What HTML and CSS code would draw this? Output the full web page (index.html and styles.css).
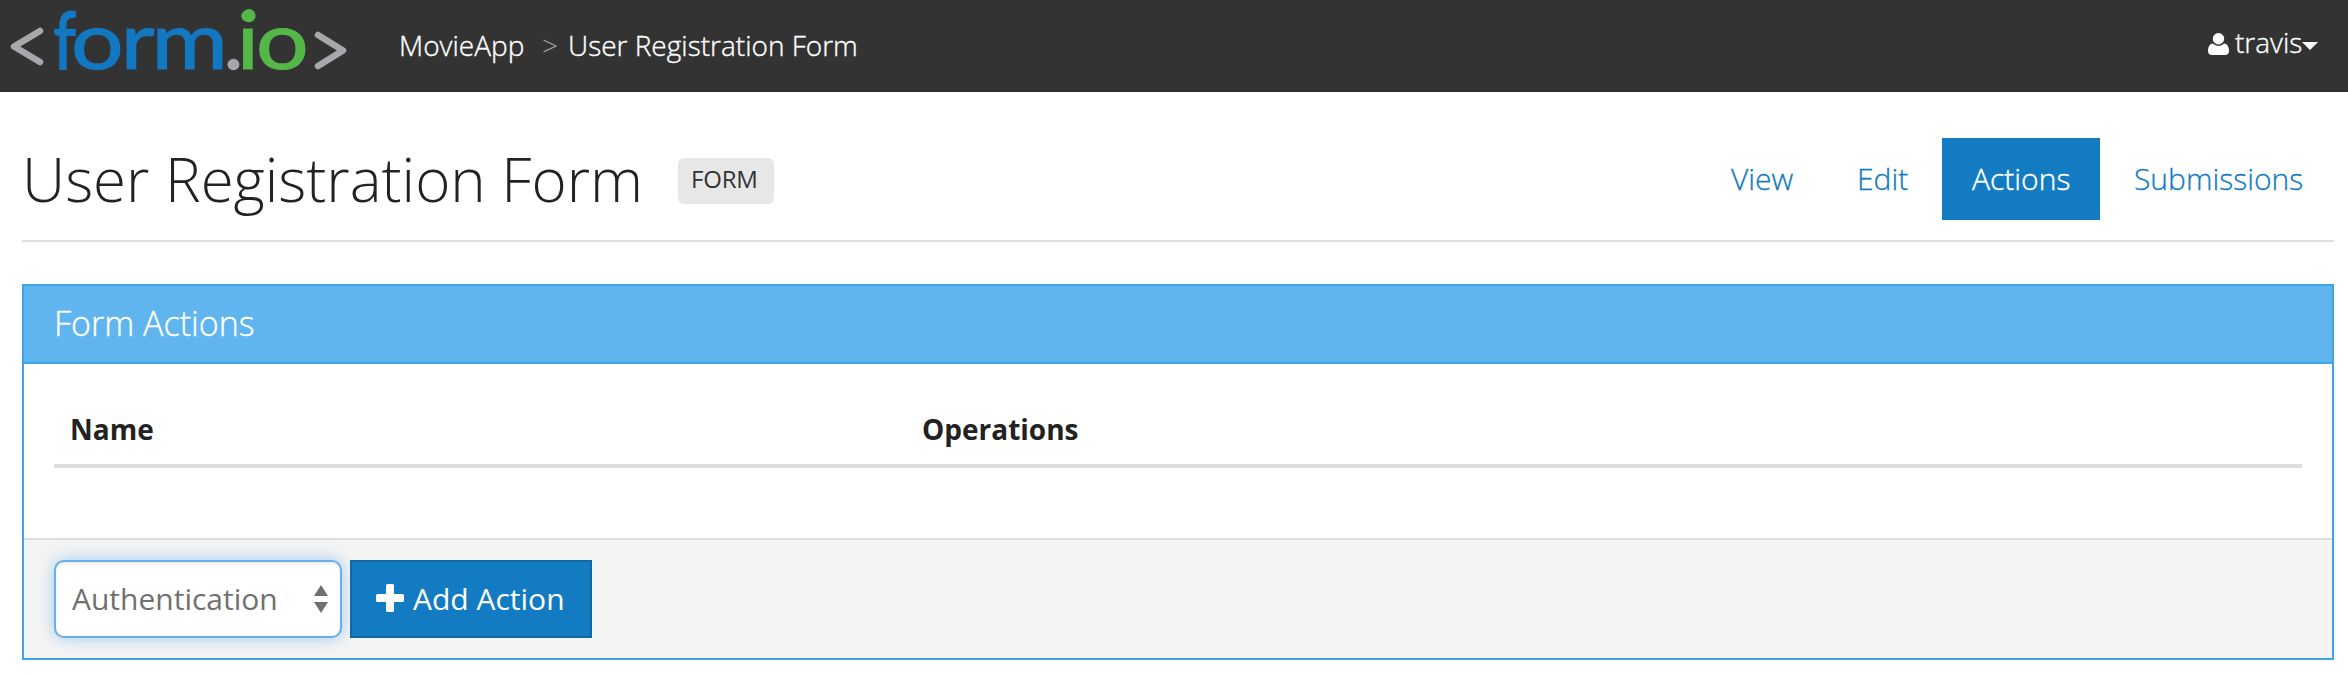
FILE: index.html
```
<!DOCTYPE html>
<html lang="en">
<head>
<meta charset="utf-8">
<title>User Registration Form</title>
<link rel="stylesheet" href="styles.css">
</head>
<body>
<header class="navbar">
  <svg class="logo" width="360" height="90" viewBox="0 0 360 90">
    <g class="logo-bracket"><path d="M40 31 L14 46.500 L40 62"/><path d="M318 35 L343 50.500 L318 66"/></g>
    <text class="logo-blue logo-f" transform="translate(53.500 69) scale(.8 1)">f</text>
    <g transform="scale(1.16 1)">
      <text class="logo-blue" y="69" x="61.300 104 130.700">orm</text>
      <text class="logo-gray" y="69" x="191.900">.</text>
      <text class="logo-green" y="69" x="204 220.600">io</text>
    </g>
    <circle class="logo-gray" cx="233.500" cy="64.500" r="5.800"/>
    <circle class="logo-green" cx="249" cy="15.700" r="6"/>
  </svg>
  <nav class="crumbs"><a class="crumb app">MovieApp</a><span class="sep">&gt;</span><a class="crumb page">User Registration Form</a></nav>
  <div class="user">
    <svg class="user-icon" width="21" height="22" viewBox="0 0 21 22"><path d="M4.800 10.500 C1.500 11 0 14 0 18 C0 20.500 1.500 22 4 22 H17 C19.500 22 21 20.500 21 18 C21 14 19.500 11 16.200 10.500 C14.500 12.300 12.500 12.800 10.500 12.800 C8.500 12.800 6.500 12.300 4.800 10.500Z"/><circle cx="10.500" cy="5.800" r="5.700"/></svg>
    <span class="user-name">travis</span>
    <svg class="caret" width="16" height="8" viewBox="0 0 16 8"><path d="M0 0H16L8 8Z"/></svg>
  </div>
</header>
<main class="content">
  <div class="title-row">
    <h1 class="title">User Registration Form</h1>
    <span class="badge">FORM</span>
    <ul class="tabs"><li class="tab view">View</li><li class="tab edit">Edit</li><li class="tab active">Actions</li><li class="tab subs">Submissions</li></ul>
  </div>
  <section class="panel">
    <h3 class="panel-heading">Form Actions</h3>
    <div class="panel-body">
      <div class="table-head"><span class="th">Name</span><span class="th ops">Operations</span></div>
    </div>
    <footer class="panel-footer">
      <div class="select"><span class="select-text">Authentication</span>
        <svg class="arrows" width="14" height="28" viewBox="0 0 14 28"><path d="M0 11L7 0L14 11ZM0 17H14L7 28Z"/></svg>
      </div>
      <button class="add"><svg class="plus" width="28" height="28" viewBox="0 0 28 28"><path d="M11.500 0H16.500Q18 0 18 1.500V10H26.500Q28 10 28 11.500V16.500Q28 18 26.500 18H18V26.500Q18 28 16.500 28H11.500Q10 28 10 26.500V18H1.500Q0 18 0 16.500V11.500Q0 10 1.500 10H10V1.500Q10 0 11.500 0Z"/></svg><span class="add-text">Add Action</span></button>
    </footer>
  </section>
</main>
</body>
</html>
```
FILE: styles.css
```
* { box-sizing: border-box; }
body { margin: 0; background: #fff; color: #222; font-family: "Open Sans", sans-serif; font-size: 30px; font-weight: 400; }
.navbar { display: flex; align-items: center; height: 92px; background: #333; border-bottom: 2px solid #2d2d2d; color: #fff; font-size: 28px; line-height: 38px; font-weight: 300; }
.logo { display: block; flex: none; font-family: Lato, sans-serif; font-size: 80px; font-weight: 400; }
.logo-bracket { fill: none; stroke: #a7a8ac; stroke-width: 6.500; stroke-linecap: round; stroke-linejoin: round; }
.logo-blue { fill: #1278c2; stroke: #1278c2; stroke-width: 1.2; }
.logo-f { stroke-width: 2; }
.logo-green { fill: #54b748; stroke: #54b748; stroke-width: 1.2; }
.logo-gray { fill: #a7a8ac; }
.crumbs { display: flex; align-items: center; margin-left: 39px; white-space: nowrap; }
.app { width: 143px; }
.crumb, .user-name { -webkit-text-stroke: .35px #fff; }
.sep { width: 26px; color: #a5a5a5; font-size: 28px; }
.user { display: flex; align-items: center; margin: 0 30px 6px auto; }
.user-icon, .caret, .arrows, .plus { display: block; flex: none; fill: currentColor; }
.user-icon { margin-top: 3px; }
.user-name { width: 66px; margin-left: 6px; }
.caret { margin: 7px 0 0 1px; }
.content { padding: 0 14px 0 22px; }
.title-row { display: flex; height: 150px; border-bottom: 2px solid #ddd; white-space: nowrap; }
.title { width: 656px; margin: 46px 0 0; font-size: 60px; line-height: 82px; font-weight: 300; }
.badge { width: 96px; height: 46px; margin-top: 66px; padding-left: 13px; border-radius: 6px; background: #e7e7e7; color: #333; font-size: 24px; line-height: 42px; letter-spacing: -.2px; }
.tabs { display: flex; height: 82px; margin: 46px 0 0 auto; padding: 0; list-style: none; color: #127bc1; line-height: 82px; font-weight: 300; -webkit-text-stroke: .3px currentColor; }
.tab { padding-left: 30px; }
.view { width: 127px; }
.edit { width: 114px; padding-left: 29px; }
.active { width: 158px; background: #127bc1; color: #fff; -webkit-text-stroke: .4px #fff; }
.subs { width: 234px; padding-left: 34px; }
.panel { height: 376px; margin-top: 42px; border: 2px solid #3fa4ea; box-shadow: 0 2px 4px rgba(0,0,0,.05); }
.panel-heading { height: 78px; margin: 0; padding-left: 30px; border-bottom: 2px solid #3fa4ea; background: #60b5ef; color: #fff; font-size: 34px; line-height: 74px; font-weight: 300; -webkit-text-stroke: .35px #fff; }
.panel-body { height: 174px; padding: 30px 30px 0; }
.table-head { display: flex; height: 74px; padding-left: 16px; border-bottom: 4px solid #ddd; font-size: 28px; font-weight: 700; line-height: 70px; }
.th { width: 852px; }
.panel-footer { display: flex; height: 120px; padding: 20px 30px; gap: 8px; border-top: 2px solid #ddd; background: #f4f4f4; }
.select { display: flex; align-items: center; justify-content: space-between; width: 288px; height: 78px; padding: 0 12px 0 16px; border: 2px solid #66afe9; border-radius: 10px; background: #fff; box-shadow: 0 0 16px rgba(102,175,233,.6), inset 0 2px 2px rgba(0,0,0,.075); color: #707070; }
.select-text { padding-bottom: 2px; }
.add { display: flex; align-items: center; width: 242px; height: 78px; margin: 0; padding: 0 0 2px 24px; border: 2px solid #1068a5; background: #127bc1; color: #fff; font: inherit; white-space: nowrap; }
.add-text { margin-left: 9px; }
```
